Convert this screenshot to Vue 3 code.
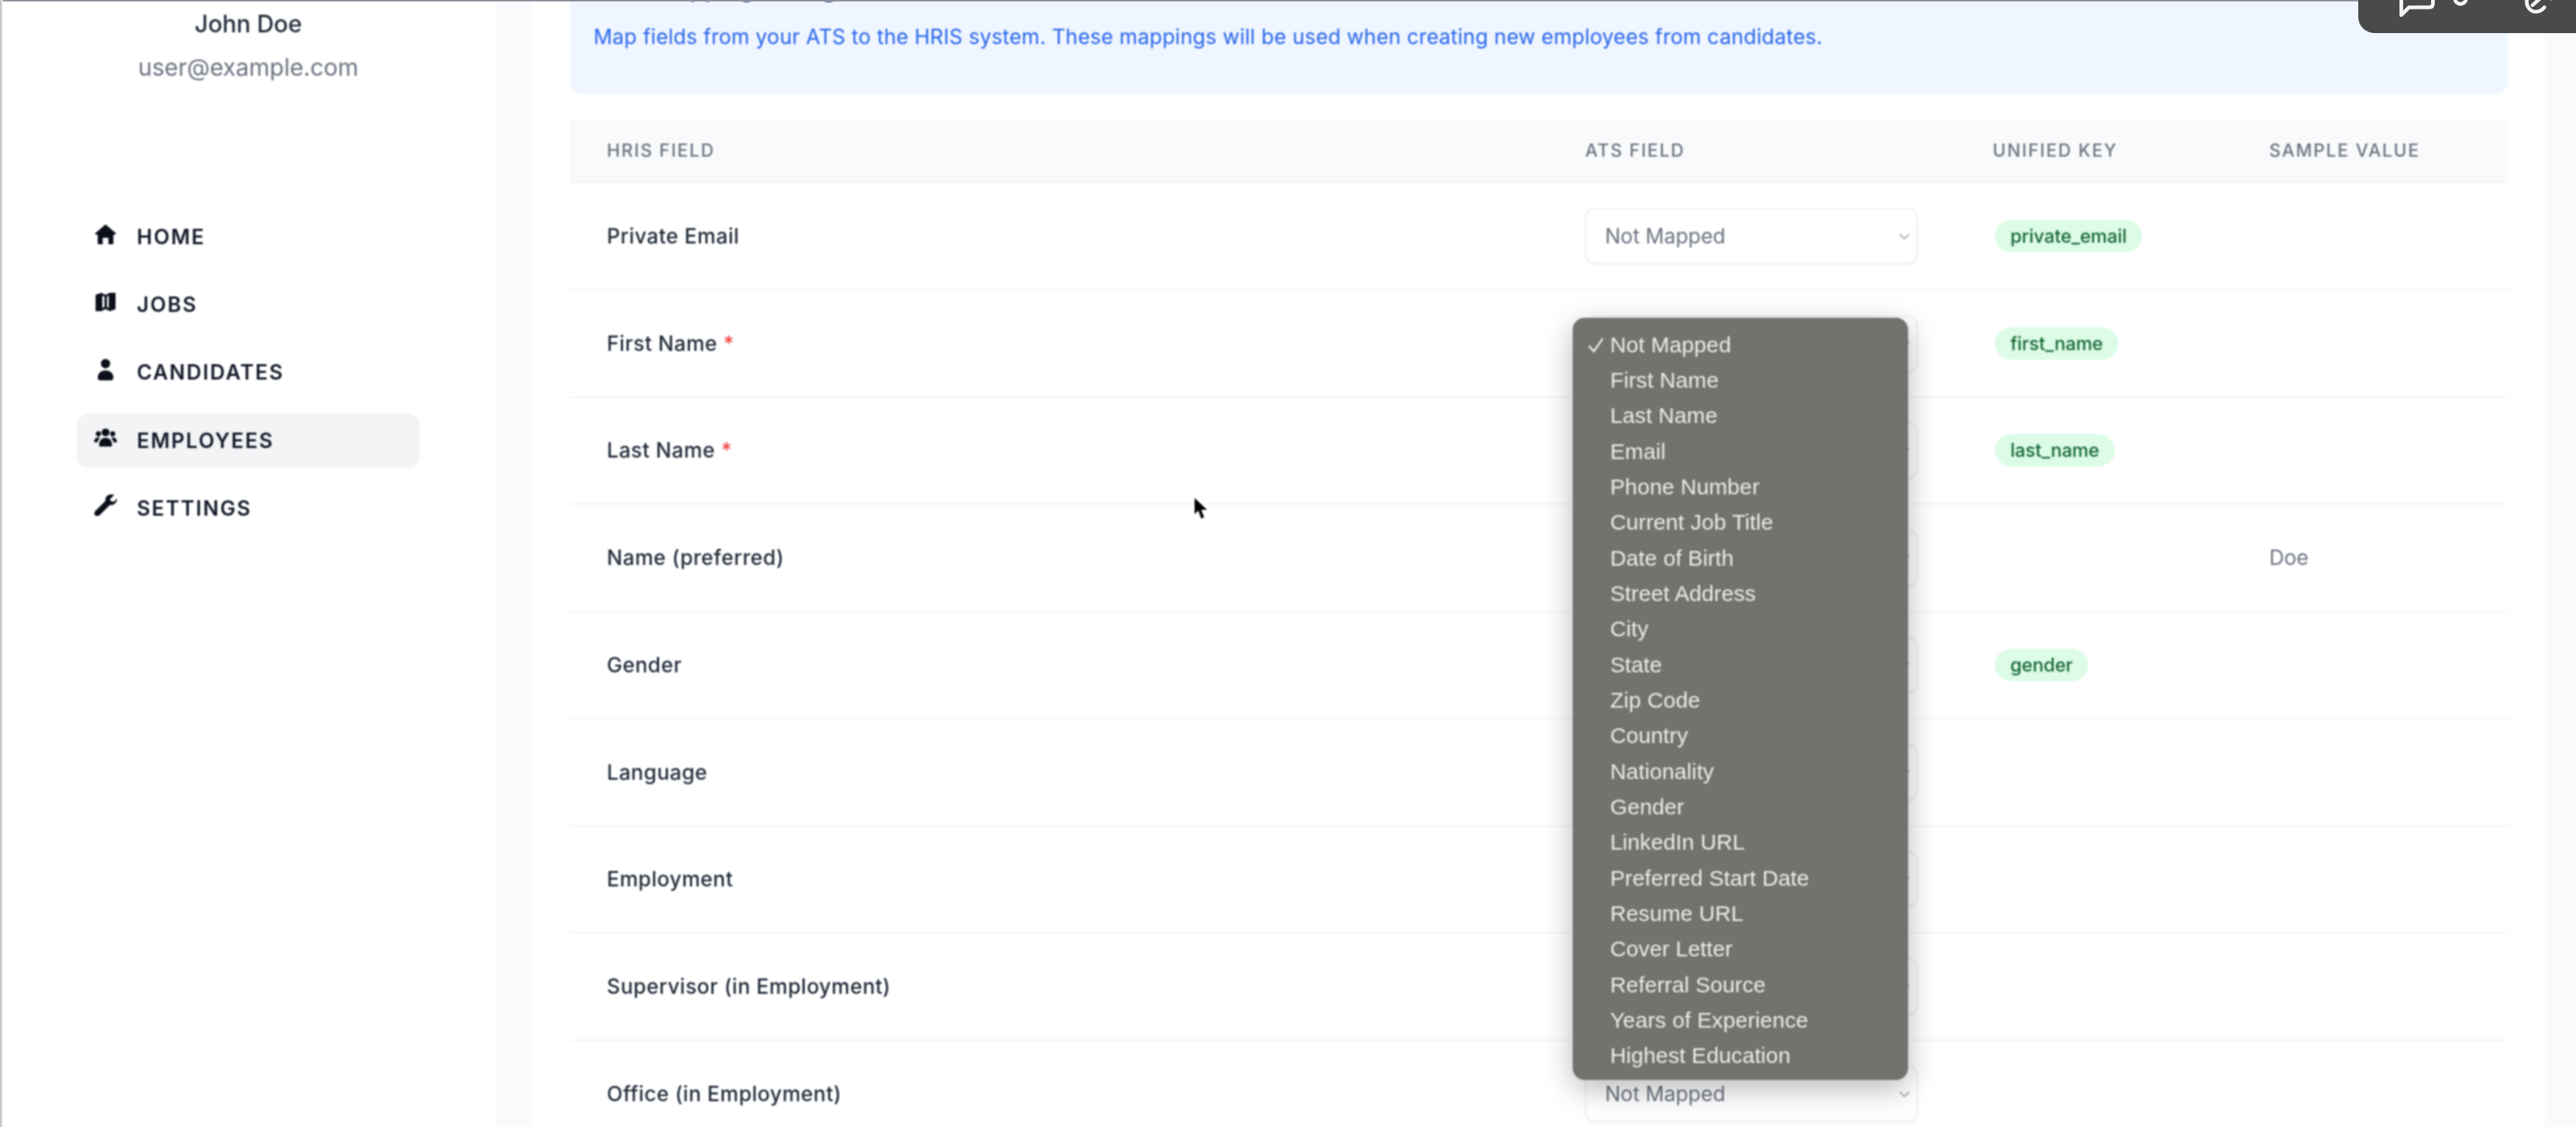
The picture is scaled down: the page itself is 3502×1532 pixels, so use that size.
<script setup>
const nav = [
  { label: 'Home', icon: 'home' },
  { label: 'Jobs', icon: 'map' },
  { label: 'Candidates', icon: 'user' },
  { label: 'Employees', icon: 'users', active: true },
  { label: 'Settings', icon: 'wrench' }
]
const rows = [
  { name: 'Private Email', key: 'private_email' },
  { name: 'First Name', req: true, key: 'first_name' },
  { name: 'Last Name', req: true, key: 'last_name' },
  { name: 'Name (preferred)', sample: 'Doe' },
  { name: 'Gender', key: 'gender' },
  { name: 'Language' },
  { name: 'Employment' },
  { name: 'Supervisor (in Employment)' },
  { name: 'Office (in Employment)' }
]
const options = ['Not Mapped','First Name','Last Name','Email','Phone Number','Current Job Title','Date of Birth','Street Address','City','State','Zip Code','Country','Nationality','Gender','LinkedIn URL','Preferred Start Date','Resume URL','Cover Letter','Referral Source','Years of Experience','Highest Education']
</script>

<template>
  <div class="screen">
    <div class="frame">
      <aside class="sidebar">
        <div class="user">
          <div class="user-name">John Doe</div>
          <div class="user-mail">user@example.com</div>
        </div>
        <nav class="nav">
          <a v-for="n in nav" :key="n.label" class="nav-item" :class="{ active: n.active }">
            <svg class="nav-icon" viewBox="0 0 32 32" fill="#0b0f19">
              <path v-if="n.icon === 'home'" d="M16 2 L31 15 L28 17 L27 16 V29 Q27 30 26 30 H20 V21 H12 V30 H6 Q5 30 5 29 V16 L4 17 L1 15 Z" />
              <path v-if="n.icon === 'map'" fill-rule="evenodd" d="M2 6 L10 3 L16 6 L22 3 L30 3 V26 L22 29 L16 26 L10 29 L2 29 Z M11.5 7 V24.5 L14.5 23 V8.5 Z M18 8.5 V23 L20.5 24.5 V7 Z" />
              <template v-if="n.icon === 'user'">
                <circle cx="16" cy="7.5" r="6.5" />
                <path d="M5 27 C5 21 10 17 16 17 C22 17 27 21 27 27 C27 30 25 31 23 31 H9 C7 31 5 30 5 27 Z" />
              </template>
              <template v-if="n.icon === 'users'">
                <circle cx="16" cy="9" r="5.5" />
                <circle cx="6" cy="11" r="3.6" />
                <circle cx="26" cy="11" r="3.6" />
                <path d="M7 27 C7 20 11 16.5 16 16.5 C21 16.5 25 20 25 27 C25 28.5 24 29 23 29 H9 C8 29 7 28.5 7 27 Z" />
                <path d="M0 22 C0 18 3 16 6.5 16 L8 17 C6 19 5 21 5 23 H1 C0.5 23 0 22.7 0 22 Z" />
                <path d="M32 22 C32 18 29 16 25.5 16 L24 17 C26 19 27 21 27 23 H31 C31.5 23 32 22.7 32 22 Z" />
              </template>
              <path v-if="n.icon === 'wrench'" d="M24 1 C27 1 28 2 28 2 L22 8 L24 11 L28 11 L32 7 C32.5 12 28 17 22 16 L8 30 C6 32 2 32 1 30 C0 28 0 26 2 24 L16 10 C15 5 19 1 24 1 Z" />
            </svg>
            <span class="nav-label">{{ n.label }}</span>
          </a>
        </nav>
      </aside>
      <main class="main">
        <section class="card">
          <div class="alert">
            <h3 class="alert-title">Field Mapping Configuration</h3>
            <p class="alert-text">Map fields from your ATS to the HRIS system. These mappings will be used when creating new employees from candidates.</p>
          </div>
          <div class="table">
            <div class="thead">
              <span>HRIS Field</span>
              <span>ATS Field</span>
              <span>Unified Key</span>
              <span>Sample Value</span>
            </div>
            <div v-for="r in rows" :key="r.name" class="trow">
              <span class="field">{{ r.name }}<span v-if="r.req" class="req"> *</span></span>
              <div class="select">
                <span>Not Mapped</span>
                <svg class="chev" viewBox="0 0 20 20" fill="none" stroke="#9ca3af" stroke-width="2"><path d="M3 7 L10 14 L17 7" /></svg>
              </div>
              <div><span v-if="r.key" class="badge">{{ r.key }}</span></div>
              <span class="sample">{{ r.sample }}</span>
            </div>
          </div>
        </section>
      </main>
      <ul class="menu">
        <li v-for="(o, i) in options" :key="o" class="menu-item">
          <svg v-if="i === 0" class="check" viewBox="0 0 20 20" fill="none" stroke="#efefed" stroke-width="2.2"><path d="M1 11 L7 18 L18 2" /></svg>
          {{ o }}
        </li>
      </ul>
      <svg class="cursor" viewBox="0 0 18 30" fill="#000"><path d="M1 0 L1 22 L6 17 L10 28 L14 26 L10 16 L18 16 Z" /></svg>
    </div>
    <div class="toolbar">
      <svg class="tool-chat" viewBox="0 0 52 26" fill="none" stroke="#f4f4f4" stroke-width="5" stroke-linecap="round" stroke-linejoin="round">
        <path d="M4.5 -6 V20.5 L15 10 H42 Q47.5 10 47.5 5 V-6" />
      </svg>
      <svg class="tool-clip" viewBox="0 0 24 12" fill="none" stroke="#f4f4f4" stroke-width="5">
        <path d="M4.5 -6 V-2 A7.5 7.5 0 0 0 19.5 -2 V-6" />
      </svg>
      <svg class="tool-arc" viewBox="0 0 44 22" fill="none" stroke="#f4f4f4" stroke-width="5" stroke-linecap="round">
        <path d="M5 -3 Q3 3 5 8 Q9 16 16 16 Q23 16 28 10 M12 7 L21 -1 M37 -2 L40 -3" />
      </svg>
    </div>
  </div>
</template>

<style>
html, body { margin: 0; background: #fff; }
</style>

<style scoped>
.screen { position: relative; width: 3502px; height: 1532px; overflow: hidden; background: #fff; font-family: Inter, "Liberation Sans", sans-serif; }
.screen::before { content: ""; position: absolute; left: 0; top: 0; width: 100%; height: 2px; background: #8f8e9c; z-index: 2; }
.screen::after { content: ""; position: absolute; left: 0; top: 0; width: 2px; height: 100%; background: #c4c4c4; box-shadow: 2px 0 0 #ececec; z-index: 2; }
.frame { position: relative; display: flex; height: 1532px; filter: blur(1px); }
.sidebar { width: 673px; flex: none; box-sizing: border-box; padding: 0 102px 0 104px; }
.user { display: flex; flex-direction: column; align-items: center; padding-top: 12px; }
.user-name { font-size: 32px; line-height: 42px; font-weight: 500; color: #1f2937; }
.user-mail { font-size: 32px; line-height: 42px; margin-top: 17px; color: #6b7280; }
.nav { display: flex; flex-direction: column; gap: 18.2px; margin-top: 172px; }
.nav-item { display: flex; align-items: center; height: 74px; box-sizing: border-box; padding-left: 24px; border-radius: 16px; }
.nav-item.active { background: #f3f4f6; }
.nav-icon { width: 31px; height: 31px; flex: none; margin-right: 27px; position: relative; top: -4px; }
.nav-label { font-size: 28px; font-weight: 600; letter-spacing: 2px; text-transform: uppercase; color: #111827; }
.main { flex: 1; min-width: 0; background: #f9fafb; padding: 0 42px 0 50px; }
.card { height: 1532px; background: #fff; box-sizing: border-box; padding: 0 50px 0 52px; }
.alert { display: flex; flex-direction: column; background: #eff6ff; border-radius: 0 0 18px 18px; height: 128px; box-sizing: border-box; padding: 0 32px; margin-bottom: 35px; }
.alert-title { margin: -35px 0 0; font-size: 32px; line-height: 40px; font-weight: 600; color: #1e3a8a; white-space: nowrap; }
.alert-text { margin: 25px 0 0; font-size: 28px; line-height: 40px; letter-spacing: 0.29px; color: #2563eb; }
.thead, .trow { display: grid; grid-template-columns: 1330px 554px 376px 1fr; align-items: center; padding-left: 50px; }
.thead { height: 86px; background: #f9fafb; border-bottom: 3px solid #f3f4f6; box-sizing: border-box; font-size: 24px; font-weight: 500; letter-spacing: 1.9px; text-transform: uppercase; color: #6b7280; }
.trow { height: 145.75px; box-sizing: border-box; border-bottom: 2px solid #f3f4f6; }
.field { font-size: 28px; font-weight: 500; letter-spacing: 0.55px; color: #1f2937; }
.req { color: #ef4444; }
.select { width: 452px; height: 76px; box-sizing: border-box; display: flex; align-items: center; justify-content: space-between; padding: 0 7px 0 25px; border: 2px solid #f0f1f3; border-radius: 12px; box-shadow: 0 2px 4px rgba(0,0,0,0.04); font-size: 28px; color: #6b7280; background: #fff; }
.chev { width: 18px; height: 18px; }
.badge { display: inline-block; line-height: 44px; padding: 0 21px; border-radius: 22px; background: #dcfce7; color: #166534; font-size: 25px; font-weight: 500; margin-left: 3px; }
.sample { font-size: 28px; color: #6b7280; }
.menu { position: absolute; left: 2138px; top: 432px; width: 456px; height: 1036px; margin: 0; padding: 12.5px 0 0 51px; box-sizing: border-box; list-style: none; border-radius: 16px; background: #72736f; box-shadow: 0 12px 40px rgba(0,0,0,0.28); }
.menu-item { position: relative; height: 48.35px; line-height: 48.35px; font-family: "Liberation Sans", sans-serif; font-size: 30px; letter-spacing: 0.1px; color: #ecece9; white-space: nowrap; }
.check { position: absolute; left: -30px; top: 12px; width: 22px; height: 24px; }
.cursor { position: absolute; left: 1623px; top: 677px; width: 18px; height: 30px; }
.toolbar { position: absolute; right: 0; top: 0; width: 296px; height: 45px; background: #4a4a4a; border-bottom-left-radius: 22px; display: flex; align-items: flex-start; padding-left: 54px; box-sizing: border-box; z-index: 3; }
.tool-chat { width: 52px; height: 26px; flex: none; }
.tool-clip { width: 24px; height: 12px; flex: none; margin-left: 21px; }
.tool-arc { width: 44px; height: 22px; flex: none; margin-left: 74px; }
</style>
